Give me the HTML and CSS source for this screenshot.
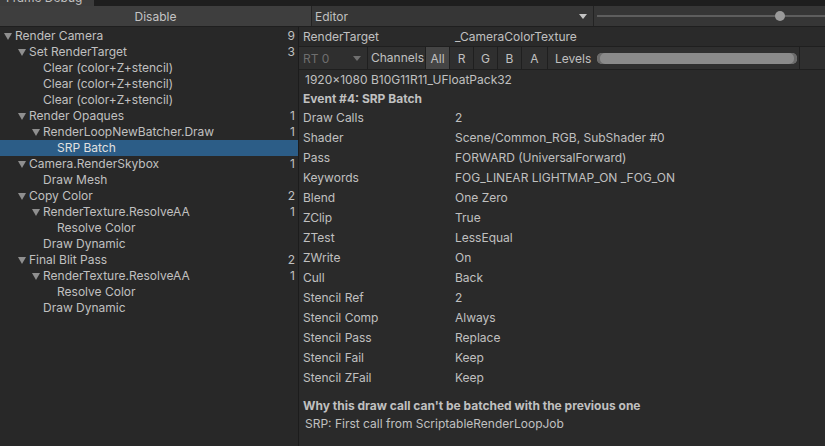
FILE: index.html
```html
<!DOCTYPE html>
<html lang="en">
<head>
  <meta charset="UTF-8" />
  <title>Frame Debug</title>
  <link rel="stylesheet" href="styles.css">
</head>
<body>

<div class="tab-strip">
  <div class="tab"><span>Frame Debug</span></div>
</div>

<div class="toolbar">
  <button class="disable-btn">Disable</button>
  <div class="editor-dropdown">
    <span>Editor</span>
    <span class="caret"></span>
  </div>
  <div class="slider">
    <div class="track"></div>
    <div class="knob"></div>
  </div>
</div>

<div class="main">
  <div class="tree">
    <div class="row l0"><span class="arrow"></span><span class="name">Render Camera</span><span class="count">9</span></div>
    <div class="row l1"><span class="arrow"></span><span class="name">Set RenderTarget</span><span class="count">3</span></div>
    <div class="row l2"><span class="leaf"></span><span class="name">Clear (color+Z+stencil)</span></div>
    <div class="row l2"><span class="leaf"></span><span class="name">Clear (color+Z+stencil)</span></div>
    <div class="row l2"><span class="leaf"></span><span class="name">Clear (color+Z+stencil)</span></div>
    <div class="row l1"><span class="arrow"></span><span class="name">Render Opaques</span><span class="count">1</span></div>
    <div class="row l2"><span class="arrow"></span><span class="name">RenderLoopNewBatcher.Draw</span><span class="count">1</span></div>
    <div class="row l3 selected"><span class="leaf"></span><span class="name">SRP Batch</span></div>
    <div class="row l1"><span class="arrow"></span><span class="name">Camera.RenderSkybox</span><span class="count">1</span></div>
    <div class="row l2"><span class="leaf"></span><span class="name">Draw Mesh</span></div>
    <div class="row l1"><span class="arrow"></span><span class="name">Copy Color</span><span class="count">2</span></div>
    <div class="row l2"><span class="arrow"></span><span class="name">RenderTexture.ResolveAA</span><span class="count">1</span></div>
    <div class="row l3"><span class="leaf"></span><span class="name">Resolve Color</span></div>
    <div class="row l2"><span class="leaf"></span><span class="name">Draw Dynamic</span></div>
    <div class="row l1"><span class="arrow"></span><span class="name">Final Blit Pass</span><span class="count">2</span></div>
    <div class="row l2"><span class="arrow"></span><span class="name">RenderTexture.ResolveAA</span><span class="count">1</span></div>
    <div class="row l3"><span class="leaf"></span><span class="name">Resolve Color</span></div>
    <div class="row l2"><span class="leaf"></span><span class="name">Draw Dynamic</span></div>
  </div>

  <div class="detail">
    <div class="prop target"><span class="label">RenderTarget</span><span>_CameraColorTexture</span></div>

    <div class="channel-bar">
      <div class="rt-select"><span>RT 0</span><span class="caret dim"></span></div>
      <span class="channels-label">Channels</span>
      <button class="ch on">All</button>
      <button class="ch">R</button>
      <button class="ch">G</button>
      <button class="ch">B</button>
      <button class="ch ch-a">A</button>
      <div class="levels">
        <span>Levels</span>
        <div class="levels-bar"></div>
      </div>
      <div class="bar-end"></div>
    </div>

    <div class="format">1920x1080 B10G11R11_UFloatPack32</div>
    <div class="event">Event #4: SRP Batch</div>

    <div class="prop"><span class="label">Draw Calls</span><span>2</span></div>
    <div class="prop"><span class="label">Shader</span><span>Scene/Common_RGB, SubShader #0</span></div>
    <div class="prop"><span class="label">Pass</span><span>FORWARD (UniversalForward)</span></div>
    <div class="prop"><span class="label">Keywords</span><span>FOG_LINEAR LIGHTMAP_ON _FOG_ON</span></div>
    <div class="prop"><span class="label">Blend</span><span>One Zero</span></div>
    <div class="prop"><span class="label">ZClip</span><span>True</span></div>
    <div class="prop"><span class="label">ZTest</span><span>LessEqual</span></div>
    <div class="prop"><span class="label">ZWrite</span><span>On</span></div>
    <div class="prop"><span class="label">Cull</span><span>Back</span></div>
    <div class="prop"><span class="label">Stencil Ref</span><span>2</span></div>
    <div class="prop"><span class="label">Stencil Comp</span><span>Always</span></div>
    <div class="prop"><span class="label">Stencil Pass</span><span>Replace</span></div>
    <div class="prop"><span class="label">Stencil Fail</span><span>Keep</span></div>
    <div class="prop"><span class="label">Stencil ZFail</span><span>Keep</span></div>

    <div class="why">Why this draw call can't be batched with the previous one</div>
    <div class="reason">SRP: First call from ScriptableRenderLoopJob</div>
  </div>
</div>

</body>
</html>
```

FILE: styles.css
```css
body {
  margin: 0;
  width: 825px;
  height: 446px;
  overflow: hidden;
  background: #282828;
  color: #c0c0c0;
  font-family: Inter, "Noto Sans", sans-serif;
  font-size: 12px;
}

/* window tab, cut off at the top */
.tab-strip {
  height: 6px;
  background: #1e1e1e;
  overflow: hidden;
}
.tab {
  width: 94px;
  height: 6px;
  background: #3c3c3c;
  overflow: hidden;
}
.tab span {
  display: block;
  margin-top: -10px;
  padding-left: 6px;
  line-height: 16px;
}

/* top toolbar */
.toolbar {
  display: flex;
  height: 20px;
  background: #3c3c3c;
  border-bottom: 1px solid #1f1f1f;
}
.disable-btn {
  width: 312px;
  height: 20px;
  padding: 0;
  border: none;
  border-right: 1px solid #232323;
  background: #3e3e3e;
  color: #c4c4c4;
  font: inherit;
}
.editor-dropdown {
  width: 282px;
  display: flex;
  align-items: center;
  justify-content: space-between;
  padding: 0 6px 0 3px;
  box-sizing: border-box;
  background: #363636;
  border-right: 1px solid #232323;
}
.caret {
  width: 0;
  height: 0;
  border-left: 4px solid transparent;
  border-right: 4px solid transparent;
  border-top: 5px solid #c4c4c4;
}
.caret.dim { border-top-color: #707070; }
.slider {
  flex: 1;
  position: relative;
  background: #363636;
}
.track {
  margin: 9px 0 0 3px;
  height: 2px;
  background: #5e5e5e;
}
.knob {
  position: absolute;
  left: 181px;
  top: 5px;
  width: 10px;
  height: 10px;
  border-radius: 50%;
  background: #9a9a9a;
}

/* main split */
.main {
  display: flex;
  height: 419px;
}
.tree {
  width: 298px;
  padding-top: 1px;
  border-right: 1px solid #1c1c1c;
  background: #282828;
}
.row {
  display: flex;
  align-items: center;
  height: 16px;
  line-height: 16px;
  padding-right: 3px;
}
.row.l0 { padding-left: 2px; }
.row.l1 { padding-left: 16px; }
.row.l2 { padding-left: 30px; }
.row.l3 { padding-left: 44px; }
.row.selected { background: #2c5d87; color: #e0e0e0; }
.arrow, .leaf {
  width: 13px;
  flex: none;
}
.arrow::before {
  content: "";
  display: block;
  margin-left: 2px;
  width: 0;
  height: 0;
  border-left: 4px solid transparent;
  border-right: 4px solid transparent;
  border-top: 7px solid #8f8f8f;
}
.name { flex: 1; }
.count { text-align: right; }

/* right side details */
.detail {
  flex: 1;
  background: #2a2a2a;
}
.prop {
  display: flex;
  height: 20px;
  line-height: 20px;
  padding-left: 4px;
}
.prop .label { width: 152px; flex: none; }
.prop.target { height: 19px; line-height: 20px; }

.channel-bar {
  display: flex;
  height: 22px;
  border-top: 1px solid #1f1f1f;
  border-bottom: 1px solid #1f1f1f;
  background: #2f2f2f;
}
.rt-select {
  width: 69px;
  display: flex;
  align-items: center;
  justify-content: space-between;
  padding: 0 6px 0 4px;
  box-sizing: border-box;
  color: #6e6e6e;
  border-right: 1px solid #1f1f1f;
}
.channels-label {
  width: 57px;
  line-height: 22px;
  padding-left: 3px;
  box-sizing: border-box;
}
.ch {
  width: 24px;
  height: 22px;
  padding: 0;
  border: none;
  border-left: 1px solid #1f1f1f;
  background: #2f2f2f;
  color: #c0c0c0;
  font: inherit;
}
.ch.on { background: #454545; }
.ch.ch-a { width: 27px; border-right: 1px solid #1f1f1f; }
.levels {
  width: 252px;
  display: flex;
  align-items: center;
  padding-left: 7px;
  box-sizing: border-box;
  border-right: 1px solid #1f1f1f;
}
.levels span { width: 42px; }
.levels-bar {
  width: 200px;
  height: 11px;
  border-radius: 5px;
  background: #8a8a8a;
  box-shadow: inset 3px 0 0 #6a6a6a, inset -3px 0 0 #6a6a6a;
}
.bar-end { flex: 1; }

.format {
  height: 20px;
  line-height: 20px;
  padding-left: 6px;
}
.event {
  height: 18px;
  line-height: 18px;
  padding-left: 4px;
  font-weight: bold;
}
.why {
  margin-top: 9px;
  height: 18px;
  line-height: 18px;
  padding-left: 4px;
  font-weight: bold;
}
.reason {
  height: 18px;
  line-height: 18px;
  padding-left: 6px;
}
```
